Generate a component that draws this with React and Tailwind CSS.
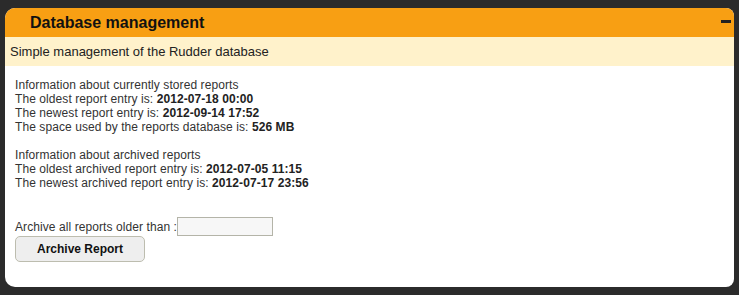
export default function App() {
  return (
    <div className="w-[739px] h-[295px] bg-[#2b2b2b] pt-[8px] pl-[5px] overflow-hidden">
      <div className="w-[729px] h-[279px] bg-white rounded-[10px] rounded-tr-[8px] rounded-br-[8px] overflow-hidden flex flex-col">
        <div className="h-[29px] bg-[#f89f13] flex items-center pl-[25px] pr-[2px] relative shrink-0">
          <span className="text-[16px] font-bold text-[#111] leading-none" style={{ fontFamily: '"Liberation Sans", Arial, sans-serif' }}>
            Database management
          </span>
          <div className="absolute left-[716px] top-[12px] w-[10px] h-[3px] bg-[#222]" />
        </div>
        <div className="h-[29px] bg-[#fff2cb] flex items-center pl-[5px] shrink-0">
          <span className="text-[13px] text-[#222]" style={{ fontFamily: '"Liberation Sans", Arial, sans-serif' }}>
            Simple management of the Rudder database
          </span>
        </div>
        <div className="pl-[10px] pt-[12px] text-[12px] leading-[14px] tracking-[0.08px] text-[#333]" style={{ fontFamily: '"Liberation Sans", Arial, sans-serif' }}>
          <div>Information about currently stored reports</div>
          <div>The oldest report entry is: <b className="text-[#222]">2012-07-18 00:00</b></div>
          <div>The newest report entry is: <b className="text-[#222]">2012-09-14 17:52</b></div>
          <div>The space used by the reports database is: <b className="text-[#222]">526 MB</b></div>
          <div className="h-[14px]" />
          <div>Information about archived reports</div>
          <div>The oldest archived report entry is: <b className="text-[#222]">2012-07-05 11:15</b></div>
          <div>The newest archived report entry is: <b className="text-[#222]">2012-07-17 23:56</b></div>
          <div className="mt-[27px] flex items-center h-[19px]">
            <span>Archive all reports older than :</span>
            <input className="w-[96px] h-[19px] border border-[#b4b4a8] bg-[#f7f7f7]" />
          </div>
          <button className="w-[130px] h-[26px] rounded-[5px] border border-[#bdbdaf] bg-[#eeeeee] font-bold text-[12px] tracking-normal text-[#111]" style={{ fontFamily: '"Liberation Sans", Arial, sans-serif' }}>
            Archive Report
          </button>
        </div>
      </div>
    </div>
  );
}
